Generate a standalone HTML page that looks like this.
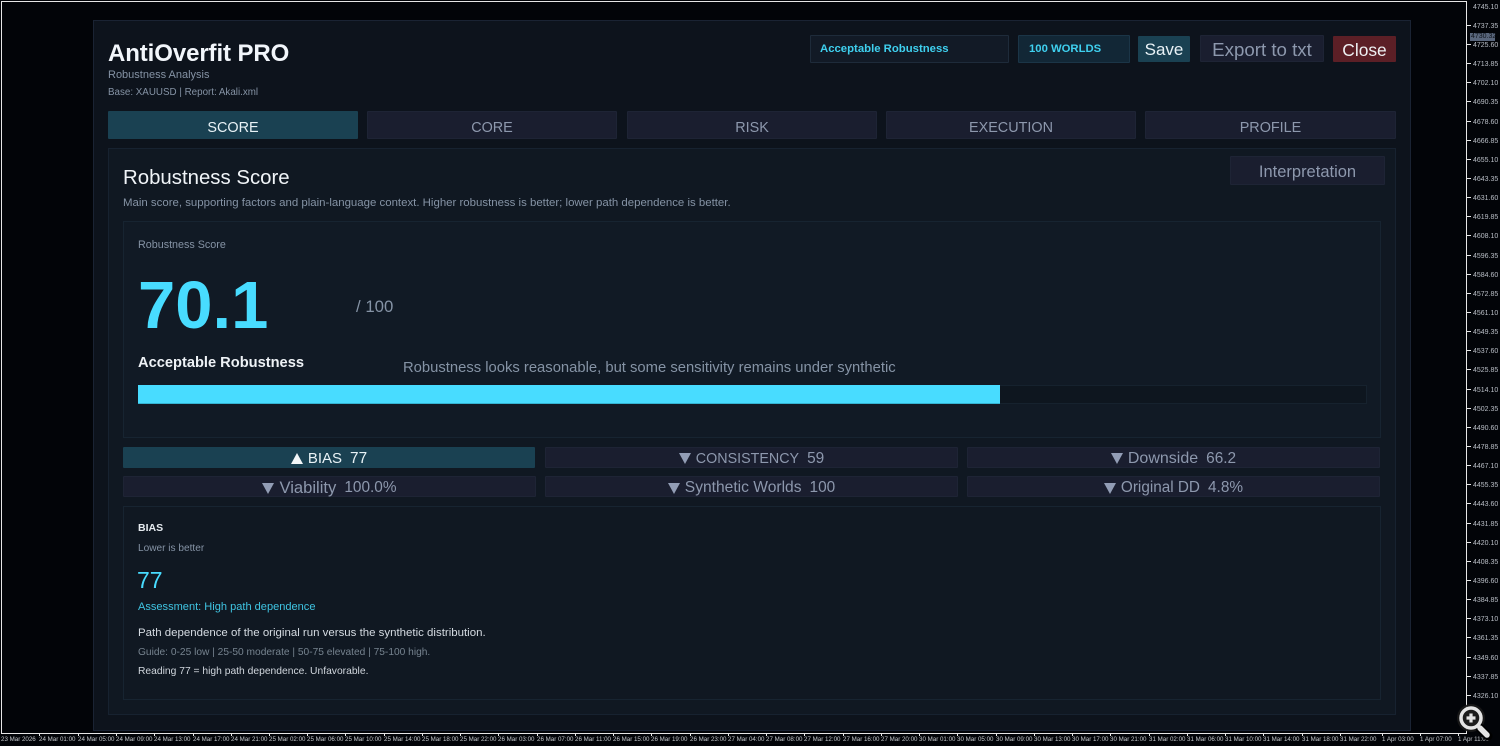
<!DOCTYPE html>
<html><head><meta charset="utf-8"><style>
html,body{margin:0;padding:0;background:#020408;width:1500px;height:746px;overflow:hidden}
body{position:relative;font-family:"Liberation Sans","DejaVu Sans",sans-serif}
.b,.t,.c{position:absolute;box-sizing:border-box}
.t{white-space:nowrap}
.c{display:flex;align-items:center;justify-content:center;white-space:nowrap;border:1px solid #1e2435;background:#1a1e2f;color:#8d98ad;border-radius:1px}
.tab{top:111px;height:28px;font-size:14.4px;padding-top:5px}
.act{background:#1a4152;border-color:#1a4152;color:#e8f2f6}
.chip{height:21px;font-size:15.4px;padding-top:2px}
.r2{padding-top:3px}
.chip i{display:inline-block;width:0;height:0;border-left:6.5px solid transparent;border-right:6.5px solid transparent;margin-right:5px}
.chip b{font-weight:normal;margin-right:8px}
.dn{border-top:11px solid #929db5}
.up{border-bottom:11px solid #f2f6f8}
.p{position:absolute;left:1473px;margin-top:3px;font:7px/9px "Liberation Sans",sans-serif;color:#b9bec6;white-space:nowrap}
.k{position:absolute;left:1467px;width:4px;height:1px;background:#e8e8e8}
.x{position:absolute;top:735px;font:6.2px/10px "Liberation Sans",sans-serif;color:#c5c8cc;white-space:nowrap}
.m{position:absolute;top:733px;width:1px;height:3px;background:#e8e8e8}
</style></head><body>
<div class="b" style="left:1px;top:1px;width:1466px;height:733px;border:1px solid #e6e6e6;background:#020408"></div>

<div class="b" style="left:93px;top:20px;width:1318px;height:711px;background:#0d131c;border:1px solid #1a2333"></div>
<div class="t" style="left:108px;top:39px;font:bold 24px/29px 'Liberation Sans',sans-serif;color:#f2f6fb;letter-spacing:-.1px">AntiOverfit PRO</div>
<div class="t" style="left:108px;top:68px;font-size:11px;line-height:14px;color:#8593a5">Robustness Analysis</div>
<div class="t" style="left:108px;top:86px;font-size:9.8px;line-height:14px;color:#8593a5">Base: XAUUSD | Report: Akali.xml</div>

<div class="c" style="left:810px;top:35px;width:199px;height:28px;justify-content:flex-start;padding-left:9px;background:#121a26;border-color:#1e2b3a;color:#3fd0ef;font-size:11.35px;font-weight:bold">Acceptable Robustness</div>
<div class="c" style="left:1018px;top:35px;width:112px;height:28px;justify-content:flex-start;padding-left:10px;background:#122736;border-color:#1b3547;color:#3fd0ef;font-size:11.3px;font-weight:bold">100 WORLDS</div>
<div class="c" style="left:1138px;top:36px;width:52px;height:26px;padding-top:2px;background:#1a4152;border-color:#1a4152;color:#e8f2f6;font-size:17px">Save</div>
<div class="c" style="left:1200px;top:35px;width:124px;height:27px;padding-top:3px;font-size:18.7px">Export to txt</div>
<div class="c" style="left:1333px;top:36px;width:63px;height:26px;padding-top:2px;background:#5c1f26;border-color:#5c1f26;color:#eef0f2;font-size:17.4px">Close</div>

<div class="c tab act" style="left:108px;width:250px">SCORE</div>
<div class="c tab" style="left:367px;width:250px">CORE</div>
<div class="c tab" style="left:627px;width:250px">RISK</div>
<div class="c tab" style="left:886px;width:250px">EXECUTION</div>
<div class="c tab" style="left:1145px;width:251px">PROFILE</div>

<div class="b" style="left:108px;top:148px;width:1288px;height:567px;background:#101822;border:1px solid #172230"></div>
<div class="c" style="left:1230px;top:156px;width:155px;height:29px;padding-top:3px;font-size:16.5px">Interpretation</div>
<div class="t" style="left:123px;top:165px;font-size:20.4px;line-height:26px;color:#f0f4f8">Robustness Score</div>
<div class="t" style="left:123px;top:196px;font-size:11.43px;line-height:14px;color:#8593a5">Main score, supporting factors and plain-language context. Higher robustness is better; lower path dependence is better.</div>

<div class="b" style="left:123px;top:221px;width:1258px;height:217px;background:#111a25;border:1px solid #172431"></div>
<div class="t" style="left:138px;top:238px;font-size:10.75px;line-height:14px;color:#8593a5">Robustness Score</div>
<div class="t" style="left:138px;top:267px;font:bold 67px/78px 'Liberation Sans',sans-serif;color:#48dcff">70.1</div>
<div class="t" style="left:356px;top:297px;font-size:16.8px;line-height:20px;color:#8593a5">/ 100</div>
<div class="t" style="left:138px;top:354px;font:bold 14.65px/18px 'Liberation Sans',sans-serif;color:#eef2f6">Acceptable Robustness</div>
<div class="t" style="left:403px;top:359px;font-size:14.8px;line-height:18px;color:#8593a5">Robustness looks reasonable, but some sensitivity remains under synthetic</div>
<div class="b" style="left:138px;top:385px;width:1229px;height:19px;background:#0e161f;border:1px solid #16222e"></div>
<div class="b" style="left:138px;top:385px;width:862px;height:19px;background:#48dcff;border-bottom:1px solid #35b3d2"></div>

<div class="c chip act" style="left:123px;top:447px;width:412px"><i class="up"></i><b style="font-size:15px">BIAS</b>77</div>
<div class="c chip" style="left:545px;top:447px;width:413px"><i class="dn"></i><b style="font-size:14.3px">CONSISTENCY</b>59</div>
<div class="c chip" style="left:967px;top:447px;width:413px"><i class="dn"></i><b style="font-size:16px">Downside</b>66.2</div>
<div class="c chip r2" style="left:123px;top:476px;width:413px"><i class="dn"></i><b style="font-size:16.6px">Viability</b>100.0%</div>
<div class="c chip r2" style="left:545px;top:476px;width:413px"><i class="dn"></i><b style="font-size:15.6px">Synthetic Worlds</b>100</div>
<div class="c chip r2" style="left:967px;top:476px;width:413px"><i class="dn"></i><b style="font-size:15.3px">Original DD</b>4.8%</div>

<div class="b" style="left:123px;top:506px;width:1258px;height:194px;background:#101822;border:1px solid #172431"></div>
<div class="t" style="left:138px;top:521px;font:bold 10.5px/14px 'Liberation Sans',sans-serif;color:#e6ebf0">BIAS</div>
<div class="t" style="left:138px;top:542px;font-size:10.1px;line-height:14px;color:#8593a5">Lower is better</div>
<div class="t" style="left:137px;top:566px;font-size:23px;line-height:28px;color:#48dcff">77</div>
<div class="t" style="left:138px;top:600px;font-size:11.05px;line-height:14px;color:#3fc4e2">Assessment: High path dependence</div>
<div class="t" style="left:138px;top:626px;font-size:11.46px;line-height:14px;color:#d5dbe2">Path dependence of the original run versus the synthetic distribution.</div>
<div class="t" style="left:138px;top:646px;font-size:10.2px;line-height:14px;color:#76838f">Guide: 0-25 low | 25-50 moderate | 50-75 elevated | 75-100 high.</div>
<div class="t" style="left:138px;top:665px;font-size:10.3px;line-height:14px;color:#d0d6dd">Reading 77 = high path dependence. Unfavorable.</div>

<div class="p" style="top:0">4745.10</div>
<div class="k" style="top:25px"></div><div class="p" style="top:19px">4737.35</div>
<div class="p" style="left:1470px;top:30px;width:24px;height:8px;line-height:8px;padding-left:1px;background:#59667c;color:#10151d">4730.32</div>
<div class="k" style="top:44px"></div><div class="p" style="top:38px">4725.60</div>
<div class="k" style="top:63px"></div><div class="p" style="top:57px">4713.85</div>
<div class="k" style="top:82px"></div><div class="p" style="top:76px">4702.10</div>
<div class="k" style="top:101px"></div><div class="p" style="top:95px">4690.35</div>
<div class="k" style="top:121px"></div><div class="p" style="top:115px">4678.60</div>
<div class="k" style="top:140px"></div><div class="p" style="top:134px">4666.85</div>
<div class="k" style="top:159px"></div><div class="p" style="top:153px">4655.10</div>
<div class="k" style="top:178px"></div><div class="p" style="top:172px">4643.35</div>
<div class="k" style="top:197px"></div><div class="p" style="top:191px">4631.60</div>
<div class="k" style="top:216px"></div><div class="p" style="top:210px">4619.85</div>
<div class="k" style="top:235px"></div><div class="p" style="top:229px">4608.10</div>
<div class="k" style="top:255px"></div><div class="p" style="top:249px">4596.35</div>
<div class="k" style="top:274px"></div><div class="p" style="top:268px">4584.60</div>
<div class="k" style="top:293px"></div><div class="p" style="top:287px">4572.85</div>
<div class="k" style="top:312px"></div><div class="p" style="top:306px">4561.10</div>
<div class="k" style="top:331px"></div><div class="p" style="top:325px">4549.35</div>
<div class="k" style="top:350px"></div><div class="p" style="top:344px">4537.60</div>
<div class="k" style="top:369px"></div><div class="p" style="top:363px">4525.85</div>
<div class="k" style="top:389px"></div><div class="p" style="top:383px">4514.10</div>
<div class="k" style="top:408px"></div><div class="p" style="top:402px">4502.35</div>
<div class="k" style="top:427px"></div><div class="p" style="top:421px">4490.60</div>
<div class="k" style="top:446px"></div><div class="p" style="top:440px">4478.85</div>
<div class="k" style="top:465px"></div><div class="p" style="top:459px">4467.10</div>
<div class="k" style="top:484px"></div><div class="p" style="top:478px">4455.35</div>
<div class="k" style="top:503px"></div><div class="p" style="top:497px">4443.60</div>
<div class="k" style="top:523px"></div><div class="p" style="top:517px">4431.85</div>
<div class="k" style="top:542px"></div><div class="p" style="top:536px">4420.10</div>
<div class="k" style="top:561px"></div><div class="p" style="top:555px">4408.35</div>
<div class="k" style="top:580px"></div><div class="p" style="top:574px">4396.60</div>
<div class="k" style="top:599px"></div><div class="p" style="top:593px">4384.85</div>
<div class="k" style="top:618px"></div><div class="p" style="top:612px">4373.10</div>
<div class="k" style="top:637px"></div><div class="p" style="top:631px">4361.35</div>
<div class="k" style="top:657px"></div><div class="p" style="top:651px">4349.60</div>
<div class="k" style="top:676px"></div><div class="p" style="top:670px">4337.85</div>
<div class="k" style="top:695px"></div><div class="p" style="top:689px">4326.10</div>

<div class="x" style="left:1px">23 Mar 2026</div>
<div class="m" style="left:39px"></div><div class="x" style="left:39px">24 Mar 01:00</div>
<div class="m" style="left:78px"></div><div class="x" style="left:78px">24 Mar 05:00</div>
<div class="m" style="left:116px"></div><div class="x" style="left:116px">24 Mar 09:00</div>
<div class="m" style="left:154px"></div><div class="x" style="left:154px">24 Mar 13:00</div>
<div class="m" style="left:193px"></div><div class="x" style="left:193px">24 Mar 17:00</div>
<div class="m" style="left:231px"></div><div class="x" style="left:231px">24 Mar 21:00</div>
<div class="m" style="left:269px"></div><div class="x" style="left:269px">25 Mar 02:00</div>
<div class="m" style="left:307px"></div><div class="x" style="left:307px">25 Mar 06:00</div>
<div class="m" style="left:345px"></div><div class="x" style="left:345px">25 Mar 10:00</div>
<div class="m" style="left:384px"></div><div class="x" style="left:384px">25 Mar 14:00</div>
<div class="m" style="left:422px"></div><div class="x" style="left:422px">25 Mar 18:00</div>
<div class="m" style="left:460px"></div><div class="x" style="left:460px">25 Mar 22:00</div>
<div class="m" style="left:498px"></div><div class="x" style="left:498px">26 Mar 03:00</div>
<div class="m" style="left:537px"></div><div class="x" style="left:537px">26 Mar 07:00</div>
<div class="m" style="left:575px"></div><div class="x" style="left:575px">26 Mar 11:00</div>
<div class="m" style="left:613px"></div><div class="x" style="left:613px">26 Mar 15:00</div>
<div class="m" style="left:651px"></div><div class="x" style="left:651px">26 Mar 19:00</div>
<div class="m" style="left:690px"></div><div class="x" style="left:690px">26 Mar 23:00</div>
<div class="m" style="left:728px"></div><div class="x" style="left:728px">27 Mar 04:00</div>
<div class="m" style="left:766px"></div><div class="x" style="left:766px">27 Mar 08:00</div>
<div class="m" style="left:804px"></div><div class="x" style="left:804px">27 Mar 12:00</div>
<div class="m" style="left:843px"></div><div class="x" style="left:843px">27 Mar 16:00</div>
<div class="m" style="left:881px"></div><div class="x" style="left:881px">27 Mar 20:00</div>
<div class="m" style="left:919px"></div><div class="x" style="left:919px">30 Mar 01:00</div>
<div class="m" style="left:957px"></div><div class="x" style="left:957px">30 Mar 05:00</div>
<div class="m" style="left:996px"></div><div class="x" style="left:996px">30 Mar 09:00</div>
<div class="m" style="left:1034px"></div><div class="x" style="left:1034px">30 Mar 13:00</div>
<div class="m" style="left:1072px"></div><div class="x" style="left:1072px">30 Mar 17:00</div>
<div class="m" style="left:1110px"></div><div class="x" style="left:1110px">30 Mar 21:00</div>
<div class="m" style="left:1149px"></div><div class="x" style="left:1149px">31 Mar 02:00</div>
<div class="m" style="left:1187px"></div><div class="x" style="left:1187px">31 Mar 06:00</div>
<div class="m" style="left:1225px"></div><div class="x" style="left:1225px">31 Mar 10:00</div>
<div class="m" style="left:1263px"></div><div class="x" style="left:1263px">31 Mar 14:00</div>
<div class="m" style="left:1302px"></div><div class="x" style="left:1302px">31 Mar 18:00</div>
<div class="m" style="left:1340px"></div><div class="x" style="left:1340px">31 Mar 22:00</div>
<div class="m" style="left:1382px"></div><div class="x" style="left:1382px">1 Apr 03:00</div>
<div class="m" style="left:1420px"></div><div class="x" style="left:1420px">1 Apr 07:00</div>
<div class="m" style="left:1458px"></div><div class="x" style="left:1458px">1 Apr 11:00</div>

<svg style="position:absolute;left:1452px;top:698px" width="48" height="48" viewBox="0 0 48 48">
<circle cx="19" cy="20" r="14" fill="#1a1a1a" opacity=".9"/>
<path d="M28 30 L36 38" stroke="#000" stroke-width="9" stroke-linecap="round"/>
<path d="M28 30 L35 37" stroke="#e4e4e4" stroke-width="5.5" stroke-linecap="round"/>
<circle cx="19" cy="20" r="10" fill="#1c1c1c" stroke="#e4e4e4" stroke-width="3.5"/>
<path d="M19 15.5V24.5M14.5 20H23.5" stroke="#e4e4e4" stroke-width="3.2"/>
</svg>
</body></html>
